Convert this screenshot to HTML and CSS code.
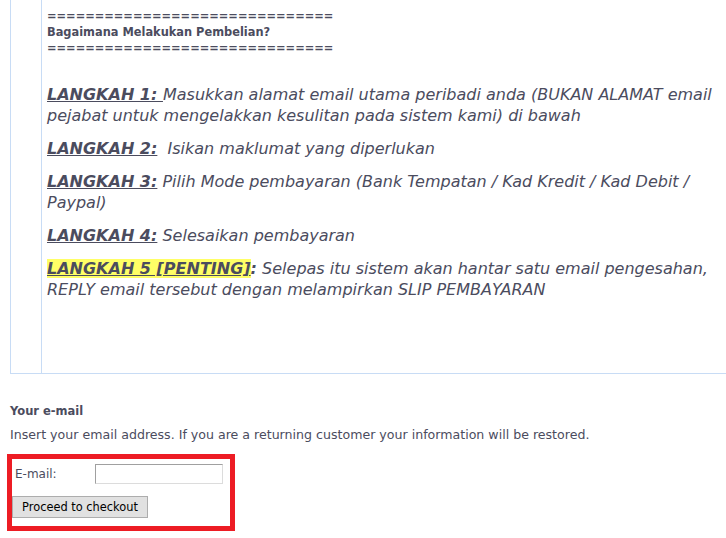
FILE: index.html
```html
<!DOCTYPE html>
<html lang="en">
<head>
    <meta charset="UTF-8">
    <title>Checkout</title>
    <link rel="stylesheet" href="styles.css">
</head>
<body>

<div class="info-box">
    <div class="info-gutter"></div>
    <div class="info-text">
        <div class="notice">
            ==============================<br>
            Bagaimana Melakukan Pembelian?<br>
            ==============================<br>
            <br>
        </div>
        <p><span class="step">LANGKAH 1: </span>Masukkan alamat email utama peribadi anda (BUKAN ALAMAT email pejabat untuk mengelakkan kesulitan pada sistem kami) di bawah</p>
        <p><span class="step">LANGKAH 2:</span>&nbsp; Isikan maklumat yang diperlukan</p>
        <p><span class="step">LANGKAH 3:</span> Pilih Mode pembayaran (Bank Tempatan / Kad Kredit / Kad Debit / Paypal)</p>
        <p><span class="step">LANGKAH 4:</span> Selesaikan pembayaran</p>
        <p><span class="step highlight">LANGKAH 5 [PENTING]</span><b>:</b> Selepas itu sistem akan hantar satu email pengesahan, REPLY email tersebut dengan melampirkan SLIP PEMBAYARAN</p>
    </div>
</div>

<div class="email-section">
    <h3>Your e-mail</h3>
    <p class="hint">Insert your email address. If you are a returning customer your information will be restored.</p>
    <form class="checkout-form">
        <div class="field-row">
            <label for="email">E-mail:</label>
            <input type="text" id="email">
        </div>
        <button type="button" class="btn-checkout">Proceed to checkout</button>
    </form>
</div>

</body>
</html>
```

FILE: styles.css
```css
* {
    box-sizing: border-box;
}
html, body {
    overflow: hidden;
}
body {
    margin: 0;
    width: 726px;
    height: 538px;
    font-family: "DejaVu Sans", Verdana, sans-serif;
    color: #4b4c5e;
    background: #fff;
}
.info-box {
    display: flex;
    margin-left: 10px;
    width: 760px;
    height: 374px;
    border-left: 1px solid #c8dcf5;
    border-bottom: 1px solid #c8dcf5;
}
.info-gutter {
    width: 31px;
    border-right: 1px solid #c8dcf5;
}
.info-text {
    flex: 1;
    padding: 8px 30px 0 5px;
}
.notice {
    font-size: 11.4px;
    font-weight: bold;
    line-height: 16px;
    color: #4b4c5e;
}
.info-text p {
    margin: 12px 0;
    font-size: 16px;
    line-height: 21px;
    font-style: italic;
}
.step {
    font-weight: bold;
    text-decoration: underline;
}
.highlight {
    background: #ffff66;
}
.email-section {
    padding: 0 10px;
}
.email-section h3 {
    margin: 30px 0 0;
    font-size: 11.5px;
    line-height: 14px;
    font-weight: bold;
}
.hint {
    margin: 9px 0 0;
    font-size: 12.6px;
    line-height: 16px;
}
.checkout-form {
    width: 228px;
    margin: 11px 0 0 -3px;
    border: 5px solid #ed1c24;
    padding: 5px 0 8px 0;
}
.field-row {
    display: flex;
    align-items: center;
    margin-left: 3px;
}
.field-row label {
    width: 80px;
    font-size: 12px;
}
.field-row input {
    width: 128px;
    height: 20px;
    border: 1px solid #a0a0a0;
    border-right-color: #dcdcdc;
    border-bottom-color: #dcdcdc;
}
.btn-checkout {
    display: block;
    margin-top: 12px;
    width: 136px;
    height: 22px;
    padding: 0;
    font-family: "DejaVu Sans", Verdana, sans-serif;
    font-size: 11.4px;
    color: #000;
    background: #e1e1e1;
    border: 1px solid #adadad;
}
```
